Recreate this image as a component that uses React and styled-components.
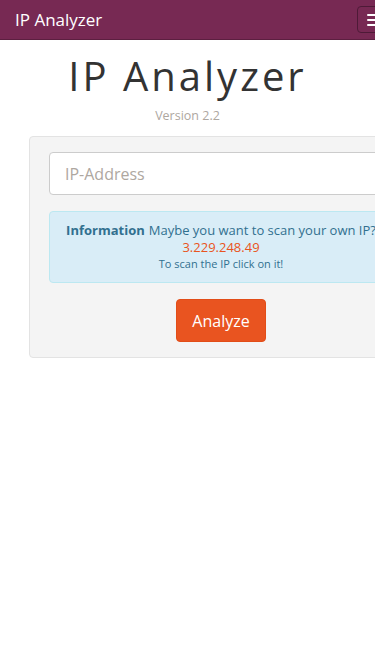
import React, { useState } from 'react';
import styled, { createGlobalStyle } from 'styled-components';

const GlobalStyle = createGlobalStyle`
  html, body {
    margin: 0;
    padding: 0;
    background: #fff;
    overflow-x: hidden;
  }
  body {
    font-family: "Open Sans", "DejaVu Sans", sans-serif;
    color: #333;
  }
`;

const Page = styled.div`
  width: 375px;
  overflow: hidden;
`;

const Navbar = styled.nav`
  height: 39px;
  background: #772953;
  border-bottom: 1px solid #5c1f40;
  display: flex;
  align-items: center;
  justify-content: space-between;
  padding-left: 15px;
`;

const Brand = styled.a`
  color: #fff;
  font-size: 17px;
  text-decoration: none;
`;

const Toggle = styled.button`
  width: 44px;
  height: 27px;
  margin-right: -26px;
  background: transparent;
  border: 1px solid #4e1a37;
  border-radius: 4px;
  display: flex;
  flex-direction: column;
  justify-content: center;
  gap: 3px;
  padding: 0 0 0 9px;
`;

const Bar = styled.span`
  display: block;
  width: 22px;
  height: 2px;
  background: #fff;
  border-radius: 1px;
`;

const Header = styled.header`
  text-align: center;
  padding-top: 10px;
`;

const Title = styled.h1`
  margin: 0;
  font-weight: 400;
  font-size: 40px;
  line-height: 52px;
  color: #333;
  letter-spacing: 3px;
`;

const Version = styled.p`
  margin: 5px 0 0;
  font-size: 12.5px;
  color: #aea79f;
`;

const Well = styled.div`
  margin: 12px 0 0 29px;
  width: 384px;
  box-sizing: border-box;
  padding: 15px 19px 15px;
  background: #f4f4f4;
  border: 1px solid #e3e3e3;
  border-radius: 4px;
  display: flex;
  flex-direction: column;
  gap: 16px;
  align-items: center;
`;

const Input = styled.input`
  width: 100%;
  box-sizing: border-box;
  height: 43px;
  padding: 0 15px;
  font-family: inherit;
  font-size: 16px;
  color: #333;
  border: 1px solid #ccc;
  border-radius: 4px;
  background: #fff;
  outline: none;
  &::placeholder {
    color: #aea79f;
  }
`;

const Info = styled.div`
  width: 100%;
  box-sizing: border-box;
  padding: 10px 8px 10px;
  background: #d9edf7;
  border: 1px solid #bce8f1;
  border-radius: 4px;
  color: #31708f;
  text-align: center;
  font-size: 13px;
  line-height: 17px;
`;

const Lead = styled.div``;

const Strong = styled.strong`
  font-weight: 700;
  margin-right: 4px;
`;

const IpLink = styled.a`
  display: block;
  color: #e95420;
  text-decoration: none;
  cursor: pointer;
`;

const Hint = styled.small`
  display: block;
  font-size: 11px;
  line-height: 16px;
`;

const Button = styled.button`
  height: 43px;
  padding: 0 15px;
  background: #e95420;
  border: 1px solid #e24d18;
  border-radius: 4px;
  color: #fff;
  font-family: inherit;
  font-size: 16px;
  cursor: pointer;
`;

const ownIp = '3.229.248.49';

export default function App() {
  const [ip, setIp] = useState('');

  return (
    <Page>
      <GlobalStyle />
      <Navbar>
        <Brand href="#">IP Analyzer</Brand>
        <Toggle aria-label="Toggle navigation">
          <Bar />
          <Bar />
          <Bar />
        </Toggle>
      </Navbar>
      <Header>
        <Title>IP Analyzer</Title>
        <Version>Version 2.2</Version>
      </Header>
      <Well>
        <Input
          placeholder="IP-Address"
          value={ip}
          onChange={(e) => setIp(e.target.value)}
        />
        <Info>
          <Lead>
            <Strong>Information</Strong>
            Maybe you want to scan your own IP?
          </Lead>
          <IpLink onClick={() => setIp(ownIp)}>{ownIp}</IpLink>
          <Hint>To scan the IP click on it!</Hint>
        </Info>
        <Button>Analyze</Button>
      </Well>
    </Page>
  );
}
